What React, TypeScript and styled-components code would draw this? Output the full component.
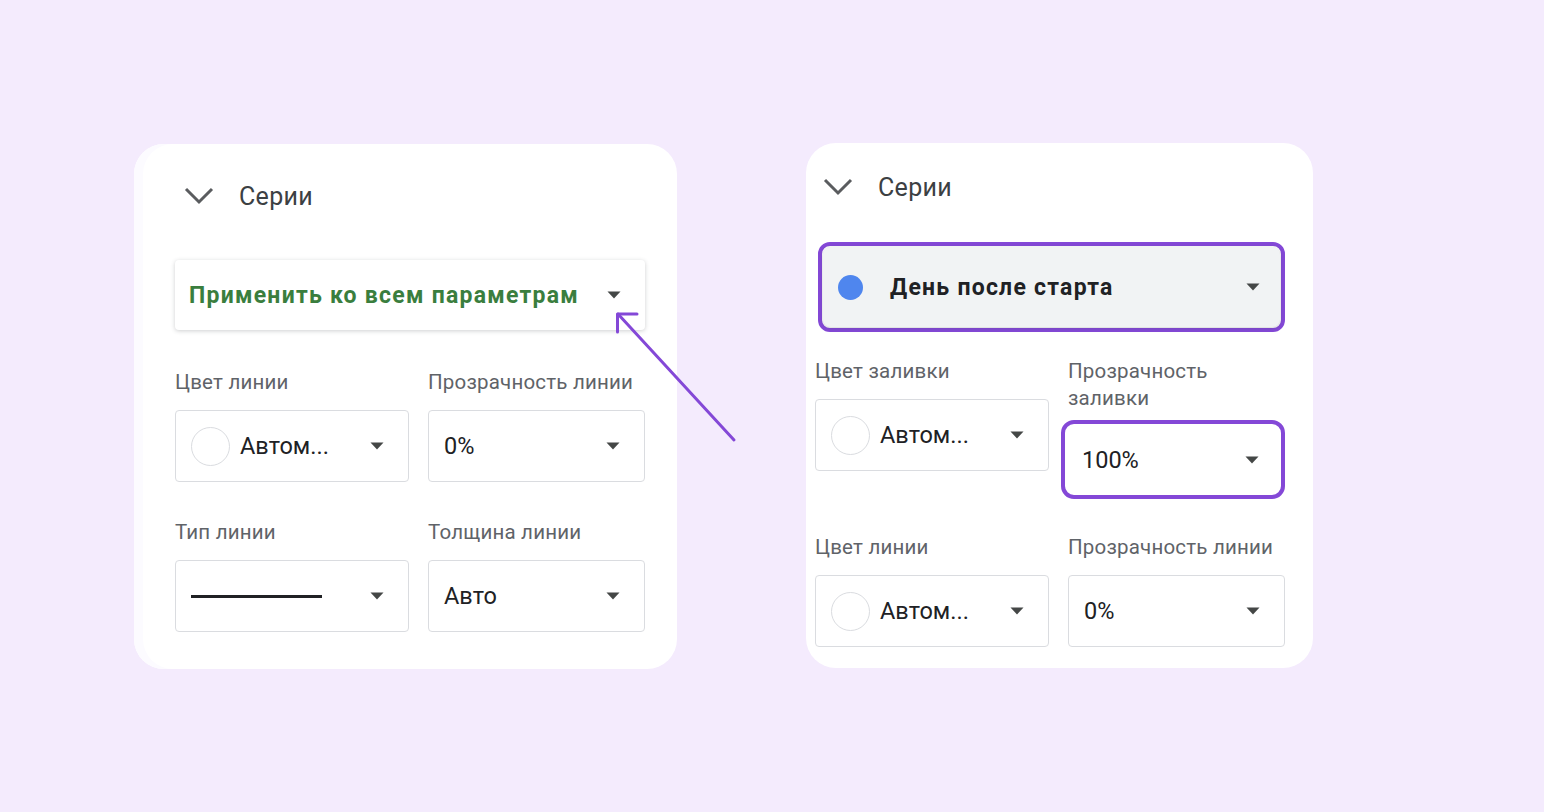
import styled, { createGlobalStyle } from "styled-components";

const purple = "#8448d7";

const GlobalStyle = createGlobalStyle`
  html, body {
    margin: 0;
    padding: 0;
    background: #f4ebfd;
    font-family: Roboto, "Noto Sans", "Liberation Sans", sans-serif;
  }
`;

const Page = styled.div`
  position: relative;
  width: 1544px;
  height: 812px;
  display: flex;
  align-items: flex-start;
  gap: 129px;
  padding: 143px 0 0 134px;
  box-sizing: border-box;
`;

const Card = styled.section<{ $pad: string }>`
  background: #fff;
  border-radius: 30px;
  height: 525px;
  box-sizing: border-box;
  padding: ${(p) => p.$pad};
  display: flex;
  flex-direction: column;
`;

const LeftCard = styled(Card)`
  width: 543px;
  margin-top: 1px;
  box-shadow: inset 9px 0 0 #fcfbff;
`;

const RightCard = styled(Card)`
  width: 507px;
`;

const Header = styled.div<{ $indent: number }>`
  height: 40px;
  display: flex;
  align-items: center;
  gap: 25px;
  padding-left: ${(p) => p.$indent}px;
  font-size: 25px;
  letter-spacing: 0.3px;
  color: #3c4043;
`;

const SeriesSelect = styled.div<{ $grey?: boolean }>`
  height: ${(p) => (p.$grey ? 80 : 70)}px;
  display: flex;
  align-items: center;
  padding: 0 ${(p) => (p.$grey ? 20 : 24)}px 0 14px;
  border-radius: ${(p) => (p.$grey ? 8 : 4)}px;
  background: ${(p) => (p.$grey ? "#f1f3f4" : "#fff")};
  box-shadow: 0 1px 4px rgba(60, 64, 67, 0.25);
`;

const SelectText = styled.span<{ $color: string }>`
  flex: 1;
  font-size: 23px;
  font-weight: 700;
  letter-spacing: 1.25px;
  color: ${(p) => p.$color};
`;

const Dot = styled.span`
  width: 25px;
  height: 25px;
  border-radius: 50%;
  background: #4f86ee;
  margin: 0 27px 0 1px;
`;

const Highlight = styled.div<{ $radius: number }>`
  border: 4px solid ${purple};
  border-radius: ${(p) => p.$radius}px;
  padding: 1px;
`;

const Grid = styled.div<{ $cols: string; $gap: number; $rowGap: number }>`
  display: grid;
  grid-template-columns: ${(p) => p.$cols};
  column-gap: ${(p) => p.$gap}px;
  row-gap: ${(p) => p.$rowGap}px;
  align-items: start;
`;

const Field = styled.div`
  display: flex;
  flex-direction: column;
  gap: 14px;
`;

const Label = styled.div`
  font-size: 20.5px;
  line-height: 27px;
  letter-spacing: 0.2px;
  color: #5f6368;
  white-space: nowrap;
`;

const Box = styled.div<{ $flat?: boolean }>`
  height: ${(p) => (p.$flat ? 69 : 72)}px;
  box-sizing: border-box;
  display: flex;
  align-items: center;
  padding: 0 ${(p) => (p.$flat ? 20 : 24)}px 0 15px;
  border: 1px solid ${(p) => (p.$flat ? "transparent" : "#dadce0")};
  border-radius: ${(p) => (p.$flat ? 8 : 4)}px;
  background: #fff;
`;

const Value = styled.span`
  flex: 1;
  font-size: 23.5px;
  color: #202124;
  white-space: nowrap;
`;

const Swatch = styled.span`
  width: 39px;
  height: 39px;
  border-radius: 50%;
  border: 1px solid #dadce0;
  box-sizing: border-box;
  margin-right: 10px;
  flex-shrink: 0;
`;

const Stroke = styled.span`
  width: 131px;
  height: 3px;
  background: #202124;
  margin-right: auto;
`;

const Spacer = styled.div<{ $h: number }>`
  height: ${(p) => p.$h}px;
  flex-shrink: 0;
`;

const Overlay = styled.svg`
  position: absolute;
  left: 600px;
  top: 300px;
  pointer-events: none;
`;

function Caret() {
  return (
    <svg width="14" height="8" viewBox="0 0 14 8">
      <path d="M0.5 0.5h13L7 7.5z" fill="#444746" />
    </svg>
  );
}

function Chevron() {
  return (
    <svg width="30" height="18" viewBox="0 0 30 18">
      <path d="M2 2l13 13L28 2" fill="none" stroke="#5a5c5f" strokeWidth="3" />
    </svg>
  );
}

function Dropdown({ children, flat }: { children: React.ReactNode; flat?: boolean }) {
  return (
    <Box $flat={flat}>
      {children}
      <Caret />
    </Box>
  );
}

function ColorValue() {
  return (
    <>
      <Swatch />
      <Value>Автом...</Value>
    </>
  );
}

export default function App() {
  return (
    <>
      <GlobalStyle />
      <Page>
        <LeftCard $pad="32px 32px 0 41px">
          <Header $indent={9}>
            <Chevron />
            <span>Серии</span>
          </Header>
          <Spacer $h={44} />
          <SeriesSelect>
            <SelectText $color="#3a7e3e">Применить ко всем параметрам</SelectText>
            <Caret />
          </SeriesSelect>
          <Spacer $h={39} />
          <Grid $cols="234px 217px" $gap={19} $rowGap={37}>
            <Field>
              <Label>Цвет линии</Label>
              <Dropdown>
                <ColorValue />
              </Dropdown>
            </Field>
            <Field>
              <Label>Прозрачность линии</Label>
              <Dropdown>
                <Value>0%</Value>
              </Dropdown>
            </Field>
            <Field>
              <Label>Тип линии</Label>
              <Dropdown>
                <Stroke />
              </Dropdown>
            </Field>
            <Field>
              <Label>Толщина линии</Label>
              <Dropdown>
                <Value>Авто</Value>
              </Dropdown>
            </Field>
          </Grid>
        </LeftCard>

        <RightCard $pad="24px 28px 0 9px">
          <Header $indent={8}>
            <Chevron />
            <span>Серии</span>
          </Header>
          <Spacer $h={35} />
          <Highlight $radius={12} style={{ marginLeft: 3 }}>
            <SeriesSelect $grey>
              <Dot />
              <SelectText $color="#202124">День после старта</SelectText>
              <Caret />
            </SeriesSelect>
          </Highlight>
          <Spacer $h={26} />
          <Grid $cols="234px 217px" $gap={19} $rowGap={35}>
            <Field>
              <Label>Цвет заливки</Label>
              <Dropdown>
                <ColorValue />
              </Dropdown>
            </Field>
            <Field>
              <Label>
                Прозрачность
                <br />
                заливки
              </Label>
              <Highlight $radius={13} style={{ marginLeft: -7, marginTop: -6 }}>
                <Dropdown flat>
                  <Value>100%</Value>
                </Dropdown>
              </Highlight>
            </Field>
            <Field>
              <Label>Цвет линии</Label>
              <Dropdown>
                <ColorValue />
              </Dropdown>
            </Field>
            <Field>
              <Label>Прозрачность линии</Label>
              <Dropdown>
                <Value>0%</Value>
              </Dropdown>
            </Field>
          </Grid>
        </RightCard>

        <Overlay width="150" height="150" viewBox="0 0 150 150">
          <g fill="none" stroke={purple} strokeWidth="3" strokeLinecap="round" strokeLinejoin="round">
            <path d="M134 140L18 14" />
            <path d="M37 14H17.5V32" />
          </g>
        </Overlay>
      </Page>
    </>
  );
}
